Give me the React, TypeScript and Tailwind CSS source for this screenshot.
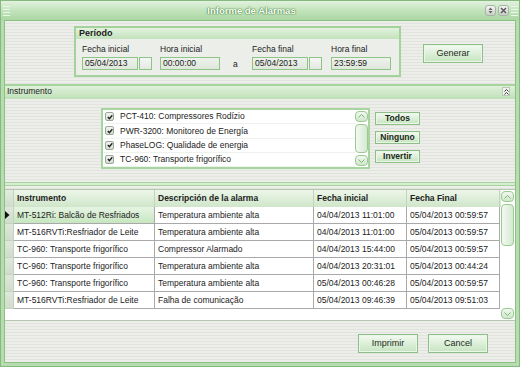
import React from "react";

const rows = [
  ["MT-512Ri: Balcão de Resfriados", "Temperatura ambiente alta", "04/04/2013 11:01:00", "05/04/2013 00:59:57"],
  ["MT-516RVTi:Resfriador de Leite", "Temperatura ambiente alta", "04/04/2013 11:01:00", "05/04/2013 00:59:57"],
  ["TC-960: Transporte frigorífico", "Compressor Alarmado", "04/04/2013 15:44:00", "05/04/2013 00:59:57"],
  ["TC-960: Transporte frigorífico", "Temperatura ambiente alta", "04/04/2013 20:31:01", "05/04/2013 00:44:24"],
  ["TC-960: Transporte frigorífico", "Temperatura ambiente alta", "05/04/2013 00:46:28", "05/04/2013 00:59:57"],
  ["MT-516RVTi:Resfriador de Leite", "Falha de comunicação", "05/04/2013 09:46:39", "05/04/2013 09:51:03"],
];

const instrumentos = [
  "PCT-410: Compressores Rodízio",
  "PWR-3200: Monitoreo de Energía",
  "PhaseLOG: Qualidade de energia",
  "TC-960: Transporte frigorífico",
];

const stripes =
  "bg-[image:repeating-linear-gradient(180deg,#ededea_0px,#ededea_2px,#e1e3de_2px,#e1e3de_3px)]";

function Btn({ label, className }: { label: string; className: string }) {
  return (
    <div
      className={`flex items-center justify-center border border-[#8fbf88] bg-gradient-to-b from-[#f3faf1] to-[#c6e4c0] text-[#1c2a1a] shadow-[inset_0_0_0_1px_#eaf6e7] ${className}`}
    >
      {label}
    </div>
  );
}

function Input({ value, className }: { value: string; className: string }) {
  return (
    <div
      className={`flex h-[13px] items-center border border-[#8ec486] bg-gradient-to-b from-[#eef2ec] to-[#dfe7dc] pl-[2px] text-[#222] ${className}`}
    >
      {value}
    </div>
  );
}

function Square() {
  return <div className="h-[13px] w-[13px] border border-[#8ec486] bg-gradient-to-b from-[#f6f7f5] to-[#e4e8e2]" />;
}

function Arrow({ up }: { up: boolean }) {
  return (
    <div className="flex h-[11px] w-[13px] items-center justify-center rounded-[4px] border border-[#9cc894] bg-gradient-to-b from-[#f1f8ef] to-[#cfe7ca]">
      <svg width="7" height="4" viewBox="0 0 7 4">
        {up ? (
          <path d="M0.5 3.5 L3.5 0.5 L6.5 3.5" fill="none" stroke="#7fb577" strokeWidth="1" />
        ) : (
          <path d="M0.5 0.5 L3.5 3.5 L6.5 0.5" fill="none" stroke="#7fb577" strokeWidth="1" />
        )}
      </svg>
    </div>
  );
}

function Check() {
  return (
    <div className="flex h-[9px] w-[9px] items-center justify-center rounded-[2px] border border-[#9aa898] bg-gradient-to-b from-[#f3f3f3] to-[#d6dcd4]">
      <svg width="6" height="6" viewBox="0 0 6 6">
        <path d="M0.8 3 L2.4 4.6 L5.3 1.2" fill="none" stroke="#1f2a1e" strokeWidth="1.4" />
      </svg>
    </div>
  );
}

export default function App() {
  return (
    <div className="flex h-[367px] w-[520px] flex-col border border-[#86b97f] bg-[#b7dcb0] font-['Liberation_Sans',Arial,sans-serif] text-[8.5px] leading-none text-[#222]">
      {/* title bar */}
      <div className="flex h-[19px] items-center bg-gradient-to-b from-[#e3f2df] via-[#c2e3bb] to-[#acd6a4]">
        <div className="ml-[2px] flex w-[7px] flex-col gap-[2px]">
          <div className="h-px bg-[#eaf6e7]" />
          <div className="h-px bg-[#eaf6e7]" />
          <div className="h-px bg-[#eaf6e7]" />
          <div className="h-px bg-[#eaf6e7]" />
        </div>
        <div className="flex-1 pl-[8px] text-center text-[9.5px] font-bold text-white [text-shadow:0_0_1px_#3f7f37,0_0_1px_#3f7f37,0_0_2px_#6fae66]">
          Informe de Alarmas
        </div>
        <div className="flex items-center gap-[2px]">
          <div className="flex h-[11px] w-[11px] items-center justify-center rounded-[3px] border border-[#a7b3a5] bg-gradient-to-b from-[#f5f5f5] to-[#c9d0c7]">
            <svg width="5" height="7" viewBox="0 0 5 7">
              <path d="M0.5 3 L2.5 0.5 L4.5 3 Z M0.5 4 L2.5 6.5 L4.5 4 Z" fill="#666" />
            </svg>
          </div>
          <div className="flex h-[11px] w-[11px] items-center justify-center rounded-[3px] border border-[#a7b3a5] bg-gradient-to-b from-[#f5f5f5] to-[#c9d0c7]">
            <svg width="7" height="7" viewBox="0 0 7 7">
              <path d="M1 1 L6 6 M6 1 L1 6" stroke="#555" strokeWidth="1.4" />
            </svg>
          </div>
        </div>
        <div className="ml-[2px] mr-[1px] flex w-[7px] flex-col gap-[2px]">
          <div className="h-px bg-[#eaf6e7]" />
          <div className="h-px bg-[#eaf6e7]" />
          <div className="h-px bg-[#eaf6e7]" />
          <div className="h-px bg-[#eaf6e7]" />
        </div>
      </div>

      {/* body */}
      <div className="flex flex-1 flex-col px-[3px] pb-[3px]">
        <div className={`flex flex-1 flex-col border border-[#8cc184] ${stripes}`}>
          {/* Período */}
          <div className="flex h-[63px] items-start pl-[69px] pt-[5px]">
            <div className="flex h-[51px] w-[327px] flex-col border-2 border-[#a5d19d] bg-[#eceeea]">
              <div className="flex h-[11px] items-center bg-gradient-to-b from-[#e2f2de] to-[#c3e2bc] pl-[3px] text-[9px] font-bold text-[#1d1d1d]">
                Período
              </div>
              <div className="flex items-end pl-[6px] pt-[6px]">
                <div className="flex flex-col gap-[3px]">
                  <span>Fecha inicial</span>
                  <div className="flex gap-px">
                    <Input value="05/04/2013" className="w-[56px]" />
                    <Square />
                  </div>
                </div>
                <div className="ml-[8px] flex flex-col gap-[3px]">
                  <span>Hora inicial</span>
                  <Input value="00:00:00" className="w-[60px]" />
                </div>
                <div className="mb-px ml-[13px] w-[19px]">a</div>
                <div className="flex flex-col gap-[3px]">
                  <span>Fecha final</span>
                  <div className="flex gap-px">
                    <Input value="05/04/2013" className="w-[56px]" />
                    <Square />
                  </div>
                </div>
                <div className="ml-[9px] flex flex-col gap-[3px]">
                  <span>Hora final</span>
                  <Input value="23:59:59" className="w-[60px]" />
                </div>
              </div>
            </div>
            <Btn label="Generar" className="ml-[22px] mt-[18px] h-[19px] w-[60px] text-[9px]" />
          </div>

          {/* Instrumento header */}
          <div className="flex h-[15px] items-center border-y-2 border-t-[#a8d4a0] border-b-[#bfe0b8] bg-gradient-to-b from-[#dff0db] to-[#c4e3bd] pl-[2px] pr-[5px]">
            <span className="flex-1">Instrumento</span>
            <div className="flex h-[9px] w-[8px] items-center justify-center border border-[#b9c9b5] bg-[#f2f2f2]">
              <svg width="5" height="6" viewBox="0 0 5 6">
                <path d="M0.5 2.5 L2.5 0.5 L4.5 2.5 M0.5 5.5 L2.5 3.5 L4.5 5.5" fill="none" stroke="#333" strokeWidth="1" />
              </svg>
            </div>
          </div>

          {/* Instrument list */}
          <div className="flex h-[83px] items-start pl-[96px] pt-[9px]">
            <div className="flex h-[61px] w-[269px] border-2 border-[#a8d4a0] bg-white">
              <div className="flex flex-1 flex-col">
                {instrumentos.map((name) => (
                  <div key={name} className="flex h-[14.25px] items-center gap-[6px] border-b border-[#eef2ed] pl-[2px]">
                    <Check />
                    <span>{name}</span>
                  </div>
                ))}
              </div>
              <div className="flex w-[13px] flex-col py-px">
                <Arrow up />
                <div className="my-[2px] h-[31px] rounded-[4px] border border-[#9cc894] bg-gradient-to-r from-[#f3f9f1] to-[#d3ead0]" />
                <div className="flex-1" />
                <Arrow up={false} />
              </div>
            </div>
            <div className="ml-[5px] mt-[4px] flex flex-col gap-[6px]">
              <Btn label="Todos" className="h-[13px] w-[45px] font-bold" />
              <Btn label="Ninguno" className="h-[13px] w-[45px] font-bold" />
              <Btn label="Invertir" className="h-[13px] w-[45px] font-bold" />
            </div>
          </div>

          {/* divider */}
          <div className="h-[4px] border-y border-[#a8d4a0] bg-[#d6ecd1]" />

          {/* grid */}
          <div className="mt-[3px] flex h-[132px] border-y border-[#b5c7b1] bg-white">
            <div className="flex flex-1 flex-col">
              <div className="flex h-[17px] bg-gradient-to-b from-[#edf6ea] to-[#cfe6c9] font-bold">
                <div className="w-[9px] border-r border-[#c3d3bf] bg-gradient-to-b from-[#e3ebe1] to-[#cfdccb]" />
                <div className="flex w-[141px] items-center border-r border-[#c3d3bf] pl-[3px]">Instrumento</div>
                <div className="flex w-[159px] items-center border-r border-[#c3d3bf] pl-[3px]">Descripción de la alarma</div>
                <div className="flex w-[93px] items-center border-r border-[#c3d3bf] pl-[3px]">Fecha inicial</div>
                <div className="flex w-[93px] items-center border-r border-[#c3d3bf] pl-[3px]">Fecha Final</div>
              </div>
              {rows.map((r, i) => (
                <div key={i} className="flex h-[17px]">
                  <div className="flex w-[9px] items-center border-r border-b border-[#c3d3bf] bg-gradient-to-b from-[#dfe7dc] to-[#d0dccc]">
                    {i === 0 && (
                      <svg width="5" height="8" viewBox="0 0 5 8">
                        <path d="M0 0 L4.5 4 L0 8 Z" fill="#111" />
                      </svg>
                    )}
                  </div>
                  <div
                    className={`flex w-[141px] items-center border-r border-b border-[#a9a9a9] pl-[3px] ${
                      i === 0 ? "bg-gradient-to-b from-[#e6f4e3] to-[#c7e6c0]" : ""
                    }`}
                  >
                    {r[0]}
                  </div>
                  <div className="flex w-[159px] items-center border-r border-b border-[#a9a9a9] pl-[3px]">{r[1]}</div>
                  <div className="flex w-[93px] items-center border-r border-b border-[#a9a9a9] pl-[3px]">{r[2]}</div>
                  <div className="flex w-[93px] items-center border-r border-b border-[#a9a9a9] pl-[3px]">{r[3]}</div>
                </div>
              ))}
            </div>
            <div className="flex w-[14px] flex-col py-px pr-px">
              <Arrow up />
              <div className="my-[2px] h-[42px] rounded-[4px] border border-[#9cc894] bg-gradient-to-r from-[#f3f9f1] to-[#d3ead0]" />
              <div className="flex-1" />
              <Arrow up={false} />
            </div>
          </div>

          {/* footer */}
          <div className="flex flex-1 items-start justify-end gap-[10px] pr-[27px] pt-[13px]">
            <Btn label="Imprimir" className="h-[19px] w-[60px] text-[9px]" />
            <Btn label="Cancel" className="h-[19px] w-[60px] text-[9px]" />
          </div>
        </div>
      </div>
    </div>
  );
}
